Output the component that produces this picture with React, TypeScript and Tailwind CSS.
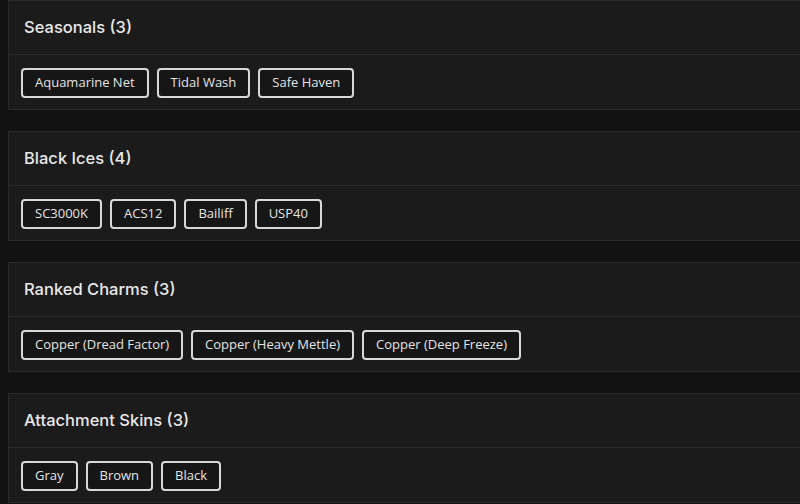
import React from "react";

const sections: { title: string; items: string[] }[] = [
  { title: "Seasonals (3)", items: ["Aquamarine Net", "Tidal Wash", "Safe Haven"] },
  { title: "Black Ices (4)", items: ["SC3000K", "ACS12", "Bailiff", "USP40"] },
  { title: "Ranked Charms (3)", items: ["Copper (Dread Factor)", "Copper (Heavy Mettle)", "Copper (Deep Freeze)"] },
  { title: "Attachment Skins (3)", items: ["Gray", "Brown", "Black"] },
];

export default function App() {
  return (
    <div
      className="w-[800px] h-[504px] overflow-hidden bg-[#121212] pl-2"
      style={{ fontFamily: '"Open Sans", "Liberation Sans", sans-serif' }}
    >
      <div className="flex flex-col gap-[21px] w-[820px]">
        {sections.map((s) => (
          <div key={s.title} className="border border-[#2a2a2a] bg-[#1b1b1b]">
            <div className="h-[54px] flex items-center px-[15px] border-b border-[#2c2c2c]">
              <span
                className="text-[16.5px] font-medium text-[#e8e8e8]"
                style={{ fontFamily: 'Inter, "Open Sans", sans-serif' }}
              >
                {s.title}
              </span>
            </div>
            <div className="h-[54px] flex items-start gap-2 pl-3 pt-[13px]">
              {s.items.map((it) => (
                <div
                  key={it}
                  className="h-[30px] flex items-center px-3 border-2 border-[#d8d8d8] rounded-[4px] bg-[#161616] text-[13px] text-[#e4e4e4]"
                >
                  {it}
                </div>
              ))}
            </div>
          </div>
        ))}
      </div>
    </div>
  );
}
